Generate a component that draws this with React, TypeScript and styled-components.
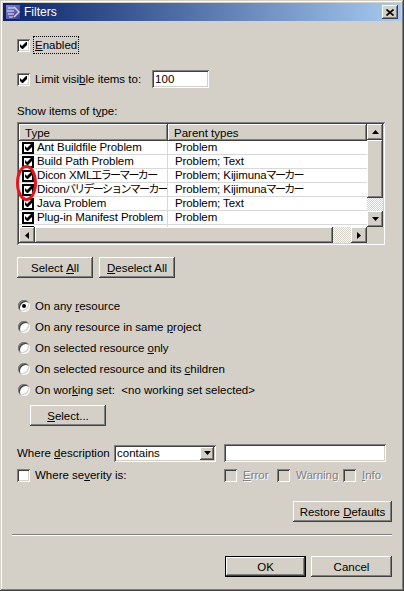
import React from 'react';
import styled, { createGlobalStyle, css } from 'styled-components';

const GlobalStyle = createGlobalStyle`
  html, body {
    margin: 0;
    padding: 0;
    background: #d4d0c8;
  }

  body {
    font-family: "Liberation Sans", "Noto Sans CJK JP", sans-serif;
    font-size: 11.5px;
    color: #000;
  }
`;

const raised = css`
  background: #d4d0c8;
  box-shadow:
    inset -1px -1px #404040,
    inset 1px 1px #ffffff,
    inset -2px -2px #808080,
    inset 2px 2px #d4d0c8;
`;

const sunken = css`
  box-shadow:
    inset 1px 1px #808080,
    inset -1px -1px #ffffff,
    inset 2px 2px #404040,
    inset -2px -2px #d4d0c8;
`;

const Window = styled.div`
  box-sizing: border-box;
  width: 404px;
  height: 591px;
  padding: 3px;
  display: flex;
  flex-direction: column;
  background: #d4d0c8;
  box-shadow:
    inset -1px -1px #404040,
    inset 1px 1px #d4d0c8,
    inset -2px -2px #808080,
    inset 2px 2px #ffffff;
`;

const TitleBar = styled.div`
  height: 18px;
  display: flex;
  align-items: center;
  gap: 3px;
  padding: 0 3px 0 2px;
  background: linear-gradient(to right, #0a246a, #a6caf0);
  color: #fff;
`;

const TitleText = styled.span`
  flex: 1;
  font-size: 12px;
`;

const CloseButton = styled.div`
  ${raised};
  width: 16px;
  height: 14px;
  display: flex;
  align-items: center;
  justify-content: center;
`;

const Body = styled.div`
  display: flex;
  flex-direction: column;
  align-items: flex-start;
  padding: 0 9px 0 14px;
`;

const CheckRow = styled.div<{ $top: number; $height?: number }>`
  display: flex;
  align-items: center;
  gap: 5px;
  height: ${(p) => p.$height ?? 16}px;
  margin-top: ${(p) => p.$top}px;
  white-space: nowrap;
`;

const SeverityRow = styled.div`
  display: flex;
  align-items: center;
  height: 16px;
  margin-top: 5px;
  white-space: nowrap;
`;

const Box = styled.span<{ $disabled?: boolean }>`
  ${sunken};
  box-sizing: border-box;
  flex: none;
  width: 13px;
  height: 13px;
  display: flex;
  align-items: center;
  justify-content: center;
  background: ${(p) => (p.$disabled ? '#d4d0c8' : '#ffffff')};
`;

const Focused = styled.span`
  outline: 1px dotted #000;
  outline-offset: 1px;
  line-height: 14px;
`;

const Key = styled.span`
  text-decoration: underline;
`;

const Dim = styled.span`
  color: #808080;
  text-shadow: 1px 1px #ffffff;
`;

const Jp = styled.span`
  font-size: 11px;
  letter-spacing: -1.7px;
  margin-left: -1px;
`;

const Field = styled.div<{ $width: number; $height: number; $gap?: number }>`
  ${sunken};
  box-sizing: border-box;
  width: ${(p) => p.$width}px;
  height: ${(p) => p.$height}px;
  margin-left: ${(p) => p.$gap ?? 0}px;
  padding: 0 3px;
  display: flex;
  align-items: center;
  justify-content: space-between;
  background: #fff;
`;

const Caption = styled.div<{ $top: number }>`
  margin-top: ${(p) => p.$top}px;
  line-height: 14px;
`;

/* table */

const TableFrame = styled.div`
  ${sunken};
  position: relative;
  box-sizing: border-box;
  width: 368px;
  height: 123px;
  margin-top: 4px;
  padding: 2px;
  display: grid;
  grid-template-columns: 348px 16px;
  grid-template-rows: 103px 16px;
  background: #d4d0c8;
`;

const ListArea = styled.div`
  overflow: hidden;
  background: #fff;
`;

const HeaderRow = styled.div`
  display: flex;
  height: 17px;
`;

const HeaderCell = styled.div<{ $width: number }>`
  ${raised};
  box-sizing: border-box;
  width: ${(p) => p.$width}px;
  padding-left: 6px;
  display: flex;
  align-items: center;
`;

const Row = styled.div`
  box-sizing: border-box;
  display: flex;
  height: 14px;
  border-bottom: 1px solid #d8d8d8;
`;

const Cell = styled.div<{ $width: number; $pad: number; $rule?: boolean }>`
  box-sizing: border-box;
  width: ${(p) => p.$width}px;
  padding-left: ${(p) => p.$pad}px;
  display: flex;
  align-items: center;
  gap: 3px;
  overflow: hidden;
  white-space: nowrap;
  line-height: 13px;
  letter-spacing: -0.1px;
  border-right: ${(p) => (p.$rule ? '1px solid #d8d8d8' : 'none')};
`;

const ListCheck = styled.span`
  box-sizing: border-box;
  flex: none;
  width: 12px;
  height: 12px;
  border: 2px solid #000;
  background: #fff;
  display: flex;
  align-items: center;
  justify-content: center;
`;

const VScroll = styled.div`
  display: flex;
  flex-direction: column;
`;

const HScroll = styled.div`
  display: flex;
`;

const ScrollButton = styled.div`
  ${raised};
  flex: none;
  width: 16px;
  height: 16px;
  display: flex;
  align-items: center;
  justify-content: center;
`;

const Thumb = styled.div<{ $size: number; $vertical?: boolean }>`
  ${raised};
  flex: none;
  ${(p) => (p.$vertical ? `height: ${p.$size}px;` : `width: ${p.$size}px;`)}
`;

const Track = styled.div`
  flex: 1;
  background: repeating-conic-gradient(#ffffff 0 25%, #d4d0c8 0 50%) 0 0 / 2px 2px;
`;

const Corner = styled.div`
  background: #d4d0c8;
`;

const Highlight = styled.div`
  position: absolute;
  left: -1px;
  top: 43px;
  width: 21px;
  height: 36px;
  box-sizing: border-box;
  border: 3px solid #e8141c;
  border-radius: 50%;
  pointer-events: none;
`;

/* buttons & radios */

const ButtonRow = styled.div<{ $top: number }>`
  display: flex;
  gap: 6px;
  margin-top: ${(p) => p.$top}px;
`;

const Button = styled.div<{ $width: number; $default?: boolean }>`
  ${raised};
  box-sizing: border-box;
  width: ${(p) => p.$width}px;
  height: 21px;
  display: flex;
  align-items: center;
  justify-content: center;
  white-space: nowrap;
  ${(p) =>
    p.$default &&
    css`
      border: 1px solid #000;
    `}
`;

const RadioGroup = styled.div`
  display: flex;
  flex-direction: column;
  gap: 5px;
  margin-top: 20px;
`;

const RadioRow = styled.div`
  display: flex;
  align-items: center;
  gap: 5px;
  height: 16px;
  padding-left: 1px;
  white-space: nowrap;
`;

const Radio = styled.span<{ $checked?: boolean }>`
  position: relative;
  box-sizing: border-box;
  flex: none;
  width: 12px;
  height: 12px;
  border-radius: 50%;
  background: #fff;
  box-shadow:
    inset 1px 1px #808080,
    inset -1px -1px #ffffff,
    inset 2px 2px #404040,
    inset -2px -2px #d4d0c8;

  ${(p) =>
    p.$checked &&
    css`
      &::after {
        content: '';
        position: absolute;
        left: 4px;
        top: 4px;
        width: 4px;
        height: 4px;
        border-radius: 50%;
        background: #000;
      }
    `}
`;

const Indented = styled.div`
  margin: 7px 0 0 13px;
`;

const DescRow = styled.div`
  display: flex;
  align-items: center;
  height: 18px;
  margin-top: 18px;
`;

const DescLabel = styled.span`
  width: 97px;
  white-space: nowrap;
`;

const ComboButton = styled.div`
  ${raised};
  width: 14px;
  height: 13px;
  margin-right: -1px;
  display: flex;
  align-items: center;
  justify-content: center;
`;

const SeverityMain = styled.div`
  display: flex;
  align-items: center;
  gap: 5px;
  width: 207px;
`;

const Option = styled.div<{ $width: number }>`
  display: flex;
  align-items: center;
  gap: 6px;
  width: ${(p) => p.$width}px;
`;

const Separator = styled.div`
  align-self: stretch;
  margin: 12px 0 0 -5px;
  border-top: 1px solid #808080;
  border-bottom: 1px solid #ffffff;
`;

const Footer = styled.div`
  align-self: stretch;
  display: flex;
  justify-content: flex-end;
  gap: 5px;
  margin-top: 20px;
`;

const RightButton = styled.div`
  align-self: flex-end;
  margin-top: 18px;
`;

/* drawings */

const Check = () => (
  <svg width="7" height="7" viewBox="0 0 7 7">
    <polygon points="0,2 2,4 6,0 7,0 7,3 3,7 2,7 0,5" fill="#000" />
  </svg>
);

type Dir = 'up' | 'down' | 'left' | 'right';

const Arrow = ({ dir }: { dir: Dir }) => {
  const vertical = dir === 'up' || dir === 'down';
  const points: Record<Dir, string> = {
    up: '3.5,0 7,4 0,4',
    down: '0,0 7,0 3.5,4',
    left: '4,0 4,7 0,3.5',
    right: '0,0 4,3.5 0,7',
  };
  return (
    <svg width={vertical ? 7 : 4} height={vertical ? 4 : 7} viewBox={vertical ? '0 0 7 4' : '0 0 4 7'}>
      <polygon points={points[dir]} fill="#000" />
    </svg>
  );
};

const AppIcon = () => (
  <svg width="16" height="16" viewBox="0 0 16 16">
    <defs>
      <linearGradient id="ic" x1="0" y1="0" x2="1" y2="1">
        <stop offset="0" stopColor="#8a88d0" />
        <stop offset="1" stopColor="#3a3888" />
      </linearGradient>
    </defs>
    <rect x="1" y="1" width="14" height="14" fill="url(#ic)" />
    <path d="M3 4h6M2 7h7M3 10h6M4 13h4" stroke="#e8e8ff" strokeWidth="1.2" />
    <path d="M9 3l5 5-5 5" stroke="#d8d8f8" strokeWidth="1.4" fill="none" />
  </svg>
);

const CloseGlyph = () => (
  <svg width="8" height="7" viewBox="0 0 8 7">
    <path d="M0.5 0.5l7 6M7.5 0.5l-7 6" stroke="#000" strokeWidth="1.6" />
  </svg>
);

const rows: { type: React.ReactNode; parent: React.ReactNode }[] = [
  { type: 'Ant Buildfile Problem', parent: 'Problem' },
  { type: 'Build Path Problem', parent: 'Problem; Text' },
  {
    type: (
      <>
        Dicon XML<Jp>エラーマーカー</Jp>
      </>
    ),
    parent: (
      <>
        Problem; Kijimuna<Jp>マーカー</Jp>
      </>
    ),
  },
  {
    type: (
      <>
        Dicon<Jp>バリデーションマーカー</Jp>
      </>
    ),
    parent: (
      <>
        Problem; Kijimuna<Jp>マーカー</Jp>
      </>
    ),
  },
  { type: 'Java Problem', parent: 'Problem; Text' },
  { type: 'Plug-in Manifest Problem', parent: 'Problem' },
  { type: 'Problem', parent: 'Marker' },
];

const App = () => {
  return (
    <>
      <GlobalStyle />
      <Window>
        <TitleBar>
          <AppIcon />
          <TitleText>Filters</TitleText>
          <CloseButton>
            <CloseGlyph />
          </CloseButton>
        </TitleBar>

        <Body>
          <CheckRow $top={16}>
            <Box>
              <Check />
            </Box>
            <Focused>
              <Key>E</Key>nabled
            </Focused>
          </CheckRow>

          <CheckRow $top={17} $height={18}>
            <Box>
              <Check />
            </Box>
            <span>
              Limit visi<Key>b</Key>le items to:
            </span>
            <Field $width={57} $height={18} $gap={6}>
              100
            </Field>
          </CheckRow>

          <Caption $top={16}>
            Show items of t<Key>y</Key>pe:
          </Caption>

          <TableFrame>
            <ListArea>
              <HeaderRow>
                <HeaderCell $width={149}>Type</HeaderCell>
                <HeaderCell $width={199}>Parent types</HeaderCell>
              </HeaderRow>
              {rows.map((r, i) => (
                <Row key={i}>
                  <Cell $width={149} $pad={3} $rule>
                    <ListCheck>
                      <Check />
                    </ListCheck>
                    <span>{r.type}</span>
                  </Cell>
                  <Cell $width={199} $pad={7}>
                    <span>{r.parent}</span>
                  </Cell>
                </Row>
              ))}
            </ListArea>
            <VScroll>
              <ScrollButton>
                <Arrow dir="up" />
              </ScrollButton>
              <Thumb $vertical $size={58} />
              <Track />
              <ScrollButton>
                <Arrow dir="down" />
              </ScrollButton>
            </VScroll>
            <HScroll>
              <ScrollButton>
                <Arrow dir="left" />
              </ScrollButton>
              <Thumb $size={298} />
              <Track />
              <ScrollButton>
                <Arrow dir="right" />
              </ScrollButton>
            </HScroll>
            <Corner />
            <Highlight />
          </TableFrame>

          <ButtonRow $top={12}>
            <Button $width={76}>
              Select&nbsp;<Key>A</Key>ll
            </Button>
            <Button $width={76}>
              <Key>D</Key>eselect All
            </Button>
          </ButtonRow>

          <RadioGroup>
            <RadioRow>
              <Radio $checked />
              <span>
                On any <Key>r</Key>esource
              </span>
            </RadioRow>
            <RadioRow>
              <Radio />
              <span>
                On any resource in same <Key>p</Key>roject
              </span>
            </RadioRow>
            <RadioRow>
              <Radio />
              <span>
                On selected resource <Key>o</Key>nly
              </span>
            </RadioRow>
            <RadioRow>
              <Radio />
              <span>
                On selected resource and its <Key>c</Key>hildren
              </span>
            </RadioRow>
            <RadioRow>
              <Radio />
              <span>
                On wor<Key>k</Key>ing set:&nbsp; &lt;no working set selected&gt;
              </span>
            </RadioRow>
          </RadioGroup>

          <Indented>
            <Button $width={76}>
              <Key>S</Key>elect...
            </Button>
          </Indented>

          <DescRow>
            <DescLabel>
              Where <Key>d</Key>escription
            </DescLabel>
            <Field $width={102} $height={17}>
              <span>contains</span>
              <ComboButton>
                <Arrow dir="down" />
              </ComboButton>
            </Field>
            <Field $width={162} $height={18} $gap={8} />
          </DescRow>

          <SeverityRow>
            <SeverityMain>
              <Box />
              <span>
                Where se<Key>v</Key>erity is:
              </span>
            </SeverityMain>
            <Option $width={53}>
              <Box $disabled />
              <Dim>
                <Key>E</Key>rror
              </Dim>
            </Option>
            <Option $width={66}>
              <Box $disabled />
              <Dim>
                Warnin<Key>g</Key>
              </Dim>
            </Option>
            <Option $width={40}>
              <Box $disabled />
              <Dim>
                <Key>I</Key>nfo
              </Dim>
            </Option>
          </SeverityRow>

          <RightButton>
            <Button $width={99}>
              Restore&nbsp;<Key>D</Key>efaults
            </Button>
          </RightButton>

          <Separator />

          <Footer>
            <Button $width={81} $default>
              OK
            </Button>
            <Button $width={81}>Cancel</Button>
          </Footer>
        </Body>
      </Window>
    </>
  );
};

export default App;
